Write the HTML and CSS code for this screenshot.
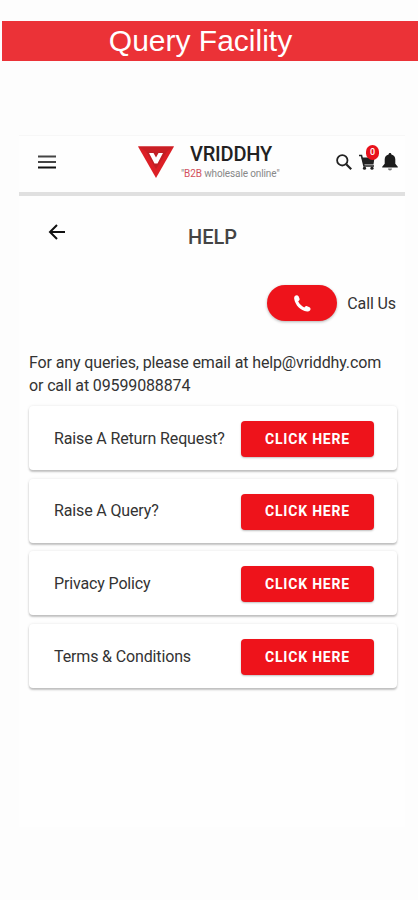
FILE: index.html
```html
<!DOCTYPE html>
<html lang="en">
<head>
  <meta charset="UTF-8">
  <meta name="viewport" content="width=device-width, initial-scale=1.0">
  <title>Query Facility</title>
  <link rel="stylesheet" href="styles.css">
</head>
<body>
<h1 class="banner">Query Facility</h1>

<div class="screen">
  <header class="header">
    <svg class="menu-icon" viewBox="0 0 18 14">
      <path d="M0 1.500h18M0 7h18" stroke="#444" stroke-width="2"/>
      <path d="M0 12.500h18" stroke="#111" stroke-width="2"/>
    </svg>
    <div class="brand">
      <svg class="logo" viewBox="0 0 36 32">
        <path d="M0 .5h36L18 32z" fill="#dc1f26"/>
        <path d="M0 .5h36l-7 5H8z" fill="#c91f25"/>
        <path d="M8 5.500h21L18 23z" fill="#c01f25"/>
        <path d="M11 7h4.500l2.500 4.500L20.500 7H25l-5.500 10.500h-3z" fill="#fff"/>
      </svg>
      <div class="brand-text">
        <span class="brand-name">VRIDDHY</span>
        <span class="tagline">"<b>B2B</b> wholesale online"</span>
      </div>
    </div>
    <div class="actions">
      <svg class="search-icon" viewBox="0 0 16 16" fill="none" stroke="#222">
        <circle cx="6.300" cy="6.300" r="5.200" stroke-width="1.800"/>
        <path d="M10.200 10.200l5 5" stroke-width="2.200"/>
      </svg>
      <div class="cart">
        <svg class="cart-icon" viewBox="0 0 16 16">
          <path d="M0 1.500h2.500L5 12h10" fill="none" stroke="#222" stroke-width="1.600"/>
          <path d="M2.500 3.500h13l-1 7H4.500z" fill="#222"/>
          <circle cx="5.500" cy="14.200" r="1.600" fill="#222"/>
          <circle cx="13" cy="14.200" r="1.600" fill="#222"/>
        </svg>
        <span class="badge">0</span>
      </div>
      <svg class="bell-icon" viewBox="0 0 16 18" fill="#1c1c1c">
        <path d="M8 0c.9 0 1.400.6 1.400 1.500 2.600.7 3.900 2.500 3.900 5v4.200l2.500 3v.9H.2v-.9l2.500-3V6.500c0-2.500 1.300-4.300 3.900-5C6.600.6 7.100 0 8 0z"/>
        <path d="M6 15.500h4c0 1.200-.9 2-2 2s-2-.8-2-2z" fill="#777"/>
      </svg>
    </div>
  </header>

  <main class="content">
    <div class="title-row">
      <svg class="back-icon" viewBox="0 0 18 16" fill="none" stroke="#111" stroke-width="2">
        <path d="M17 8H2M9 1L2 8l7 7"/>
      </svg>
      <h2 class="title">HELP</h2>
    </div>

    <div class="call-row">
      <button class="call-button">
        <svg class="phone-icon" viewBox="0 0 18 18" fill="#fff">
          <path d="M1.200.8C2.400-.2 4.100.1 4.800 1.400l1 2.300c.4.900.1 1.700-.6 2.300l-.8.7c1.300 2.800 3.600 5.100 6.500 6.500l.9-.9c.6-.6 1.300-.8 2.100-.4l2.500 1.200c1.300.6 1.500 2.200.5 3.200-.8.9-1.700 1.400-3 1.200C6.800 16.500 1.300 10.900.2 4 0 2.700.3 1.600 1.200.8z"/>
        </svg>
      </button>
      <span class="call-label">Call Us</span>
    </div>

    <p class="contact">For any queries, please email at help@vriddhy.com<br>or call at 09599088874</p>

    <div class="cards">
      <div class="card">
        <span class="card-label">Raise A Return Request?</span>
        <button class="card-button">CLICK HERE</button>
      </div>
      <div class="card">
        <span class="card-label">Raise A Query?</span>
        <button class="card-button">CLICK HERE</button>
      </div>
      <div class="card">
        <span class="card-label">Privacy Policy</span>
        <button class="card-button">CLICK HERE</button>
      </div>
      <div class="card">
        <span class="card-label">Terms &amp; Conditions</span>
        <button class="card-button">CLICK HERE</button>
      </div>
    </div>
  </main>
</div>
</body>
</html>
```
FILE: styles.css
```css
* {
  box-sizing: border-box;
}
body {
  margin: 0;
  padding-top: 21px;
  height: 900px;
  background-color: #fdfdfd;
  font-family: Roboto, sans-serif;
  color: #333;
  overflow: hidden;
}
svg {
  display: block;
  flex-shrink: 0;
}
button {
  border: none;
  padding: 0;
  background-color: #ee131b;
  color: white;
  font-family: inherit;
}
.banner {
  margin: 0 0 0 2px;
  padding-right: 19px;
  height: 40px;
  background-color: #eb3237;
  color: white;
  font: 30px/40px "Liberation Sans", Arial, sans-serif;
  text-align: center;
}
.screen {
  width: 386px;
  height: 692px;
  margin: 74px 0 0 19px;
  background-color: #fefefe;
  border-top: 1px solid #f7f7f7;
}
.header {
  display: flex;
  align-items: flex-start;
  height: 60px;
  padding: 9px 7px 0 18px;
  border-bottom: 4px solid #e0e0e0;
}
.menu-icon {
  width: 18px;
  height: 14px;
  margin: 10px 0 0 1px;
}
.brand {
  display: flex;
  margin-left: 82px;
}
.logo {
  width: 36px;
  height: 32px;
  margin-top: 1px;
}
.brand-text {
  display: flex;
  flex-direction: column;
  width: 100px;
  margin-left: 7px;
}
.brand-name {
  color: #222;
  font-size: 20px;
  line-height: 18px;
  font-weight: 500;
  padding-left: 9px;
  letter-spacing: -0.2px;
}
.tagline {
  margin-top: 4px;
  color: #888;
  font-size: 10px;
  line-height: 13px;
  letter-spacing: -0.12px;
  white-space: nowrap;
}
.tagline b {
  color: #d3505c;
  font-weight: 400;
}
.actions {
  display: flex;
  margin-left: auto;
}
.search-icon {
  width: 16px;
  height: 16px;
  margin-top: 9px;
}
.cart {
  position: relative;
  margin: 9px 7px 0;
}
.cart-icon {
  width: 16px;
  height: 16px;
}
.badge {
  position: absolute;
  top: -9px;
  left: 7px;
  width: 13px;
  height: 15px;
  border-radius: 7px;
  background-color: #e8111b;
  color: white;
  font-size: 9px;
  line-height: 14px;
  font-weight: 500;
  text-align: center;
}
.bell-icon {
  width: 16px;
  height: 18px;
  margin-top: 8px;
}
.content {
  padding: 0 8px 0 10px;
}
.title-row {
  display: flex;
  height: 89px;
  padding: 28px 0 0 19px;
}
.back-icon {
  width: 18px;
  height: 16px;
}
.title {
  margin: 0 0 0 122px;
  font-size: 20px;
  line-height: 26px;
  font-weight: 500;
  color: #444;
}
.call-row {
  display: flex;
  align-items: center;
  justify-content: flex-end;
  gap: 10px;
  padding-right: 1px;
}
.call-button {
  display: flex;
  align-items: center;
  justify-content: center;
  width: 70px;
  height: 36px;
  border-radius: 18px;
  box-shadow: 0 1px 3px rgba(0,0,0,0.3);
}
.phone-icon {
  width: 17px;
  height: 17px;
}
.call-label {
  font-size: 16px;
  letter-spacing: -0.12px;
}
.contact {
  margin: 30px 0 9px;
  font-size: 16px;
  line-height: 23px;
  letter-spacing: -0.13px;
  white-space: nowrap;
}
.cards {
  display: flex;
  flex-direction: column;
  gap: 8.7px;
}
.card {
  display: flex;
  align-items: center;
  justify-content: space-between;
  height: 64px;
  padding: 0 23px 0 25px;
  border-radius: 4px;
  background-color: white;
  box-shadow: 0 2px 2px rgba(0,0,0,0.22), 0 0 3px rgba(0,0,0,0.1);
}
.card-label {
  font-size: 16px;
  letter-spacing: -0.14px;
}
.card-button {
  width: 133px;
  height: 36px;
  margin-top: 2px;
  padding-bottom: 1px;
  border-radius: 4px;
  font-size: 14px;
  font-weight: 700;
  letter-spacing: 0.8px;
  box-shadow: 0 1px 2px rgba(0,0,0,0.25);
}
```
